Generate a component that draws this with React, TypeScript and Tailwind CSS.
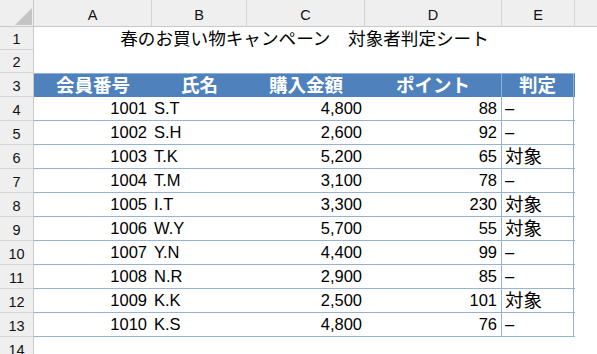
import React from "react";

const rows = [
  ["1001", "S.T", "4,800", "88", "–"],
  ["1002", "S.H", "2,600", "92", "–"],
  ["1003", "T.K", "5,200", "65", "対象"],
  ["1004", "T.M", "3,100", "78", "–"],
  ["1005", "I.T", "3,300", "230", "対象"],
  ["1006", "W.Y", "5,700", "55", "対象"],
  ["1007", "Y.N", "4,400", "99", "–"],
  ["1008", "N.R", "2,900", "85", "–"],
  ["1009", "K.K", "2,500", "101", "対象"],
  ["1010", "K.S", "4,800", "76", "–"],
];

const font = { fontFamily: '"Liberation Sans", "Noto Sans CJK JP", sans-serif' };

function RowHead({ n, h }: { n: number; h: string }) {
  return (
    <div
      className={`w-[34px] shrink-0 ${h} bg-[#efefef] border-r border-b border-r-[#c8c8c8] border-b-[#d6d6d6] flex items-end justify-center text-[14.5px] leading-[14px] pb-[3px] text-[#111]`}
    >
      {n}
    </div>
  );
}

export default function App() {
  return (
    <div className="w-[597px] h-[354px] bg-white overflow-hidden text-black" style={font}>
      {/* column headers */}
      <div className="flex h-[27px]">
        <div className="w-[34px] shrink-0 h-full bg-[#efefef] border-r border-b border-[#c8c8c8] relative">
          <svg className="absolute left-0 top-0" width="34" height="27">
            <polygon points="32,8 32,25 15,25" fill="#c4c4c4" />
          </svg>
        </div>
        {[
          ["A", "w-[118px]"],
          ["B", "w-[95px]"],
          ["C", "w-[118px]"],
          ["D", "w-[137px]"],
          ["E", "w-[73px]"],
        ].map(([l, w]) => (
          <div
            key={l}
            className={`${w} shrink-0 h-full bg-[#efefef] border-r border-b border-r-[#d4d4d4] border-b-[#c8c8c8] flex items-end justify-center text-[14.5px] leading-[14px] pb-[4px] text-[#111]`}
          >
            {l}
          </div>
        ))}
        <div className="flex-1 h-full bg-[#efefef] border-b border-[#c8c8c8]" />
      </div>

      {/* row 1 title */}
      <div className="flex h-[23px]">
        <RowHead n={1} h="h-[23px]" />
        <div className="w-[541px] shrink-0 flex items-end justify-center text-[17.6px] leading-[18px] pb-[2px]">
          春のお買い物キャンペーン　対象者判定シート
        </div>
      </div>

      {/* row 2 */}
      <div className="flex h-[23px]">
        <RowHead n={2} h="h-[23px]" />
      </div>

      {/* row 3 header */}
      <div className="flex h-[24px]">
        <RowHead n={3} h="h-[24px]" />
        <div className="flex w-[541px] shrink-0 bg-[#4f81bd] text-white font-bold text-[18.5px] leading-[19px] border-t border-[#8fb0d8]">
          <div className="w-[118px] flex items-end justify-center pb-[2px]">会員番号</div>
          <div className="w-[95px] flex items-end justify-center pb-[2px]">氏名</div>
          <div className="w-[118px] flex items-end justify-center pb-[2px]">購入金額</div>
          <div className="w-[137px] flex items-end justify-center pb-[2px] border-r border-[#8fb0d8]">ポイント</div>
          <div className="w-[72px] flex items-end justify-center pb-[2px] border-r border-[#8fb0d8]">判定</div>
        </div>
      </div>

      {/* data rows */}
      {rows.map((r, i) => (
        <div key={i} className="flex h-[24px]">
          <RowHead n={i + 4} h="h-[24px]" />
          <div className="flex w-[541px] shrink-0 border-b border-[#95b3d7] text-[16.5px] leading-[17px]">
            <div className="w-[118px] flex items-end justify-end pr-[5px] pb-[3px]">{r[0]}</div>
            <div className="w-[95px] flex items-end justify-start pl-[2px] pb-[3px]">{r[1]}</div>
            <div className="w-[118px] flex items-end justify-end pr-[3px] pb-[3px]">{r[2]}</div>
            <div className="w-[137px] flex items-end justify-end pr-[4px] pb-[3px] border-r border-[#95b3d7]">{r[3]}</div>
            <div
              className={`w-[72px] flex items-end justify-start pl-[3px] pb-[3px] border-r border-[#95b3d7] ${
                r[4] === "対象" ? "text-[18.5px]" : ""
              }`}
            >
              {r[4]}
            </div>
          </div>
        </div>
      ))}

      {/* row 14 */}
      <div className="flex h-[24px]">
        <RowHead n={14} h="h-[24px]" />
      </div>
    </div>
  );
}
